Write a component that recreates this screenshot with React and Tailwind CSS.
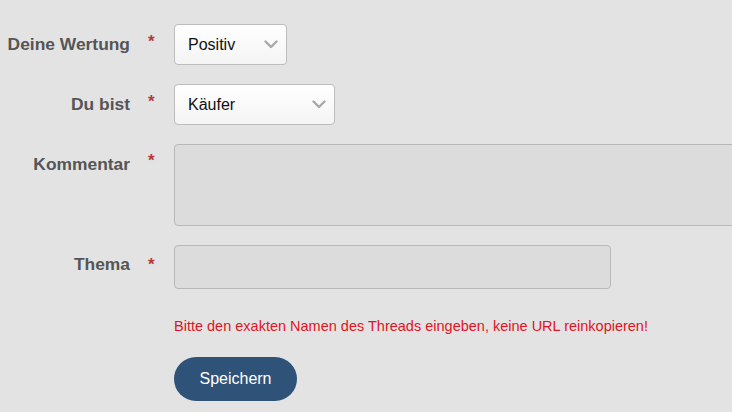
import React from 'react';

const Chevron = () => (
  <svg width="14" height="9" viewBox="0 0 14 9" className="shrink-0">
    <path d="M1.5 1.5 L7 7 L12.5 1.5" fill="none" stroke="#a8a8a8" strokeWidth="2.4" strokeLinecap="round" strokeLinejoin="round" />
  </svg>
);

const Label = ({ children, top, up }) => {
  let pos = 'items-center self-center -mt-[2px]';
  if (top) pos = 'items-start pt-[10px]';
  if (up) pos = 'items-center self-center -mt-[7px]';
  return (
    <div className={`flex justify-end ${pos}`}>
      <span className="text-[17.4px] font-bold text-[#555555] leading-5">{children}</span>
    </div>
  );
};

const Star = ({ top }) => (
  <div className={`pl-[18px] text-[#b43a3a] text-[17px] font-bold leading-5 ${top ? 'pt-[7px]' : 'self-center -mt-[5px]'}`}>*</div>
);

const Select = ({ value, width }) => (
  <div
    className={`${width} h-[41px] flex items-center justify-between pl-[13px] pr-[8px] rounded-[4px] border border-[#bdbdbd] bg-gradient-to-b from-white to-[#f4f4f4] text-[16px] text-[#111111]`}
  >
    <span className="pt-px">{value}</span>
    <Chevron />
  </div>
);

export default function App() {
  return (
    <div className="w-[732px] h-[412px] overflow-hidden bg-[#e3e3e3] font-['Liberation_Sans',Arial,sans-serif]">
      <div className="grid grid-cols-[130px_44px_1fr] pt-[24px] gap-y-[19px]">
        <Label>Deine Wertung</Label>
        <Star />
        <Select value="Positiv" width="w-[113px]" />

        <Label>Du bist</Label>
        <Star />
        <Select value="Käufer" width="w-[161px]" />

        <Label top>Kommentar</Label>
        <Star top />
        <div className="h-[82px] w-[580px] rounded-l-[4px] border border-[#b8b8b8] bg-[#dcdcdc]" />

        <Label up>Thema</Label>
        <Star />
        <div className="h-[44px] w-[437px] rounded-[4px] border border-[#b8b8b8] bg-[#dcdcdc]" />

        <div />
        <div />
        <div className="flex flex-col pt-[8px]">
          <p className="text-[14.5px] text-[#e0141e] leading-5">
            Bitte den exakten Namen des Threads eingeben, keine URL reinkopieren!
          </p>
          <button className="mt-[21px] w-[123px] h-[44px] rounded-full bg-[#2f5378] text-white text-[16px]">
            Speichern
          </button>
        </div>
      </div>
    </div>
  );
}
